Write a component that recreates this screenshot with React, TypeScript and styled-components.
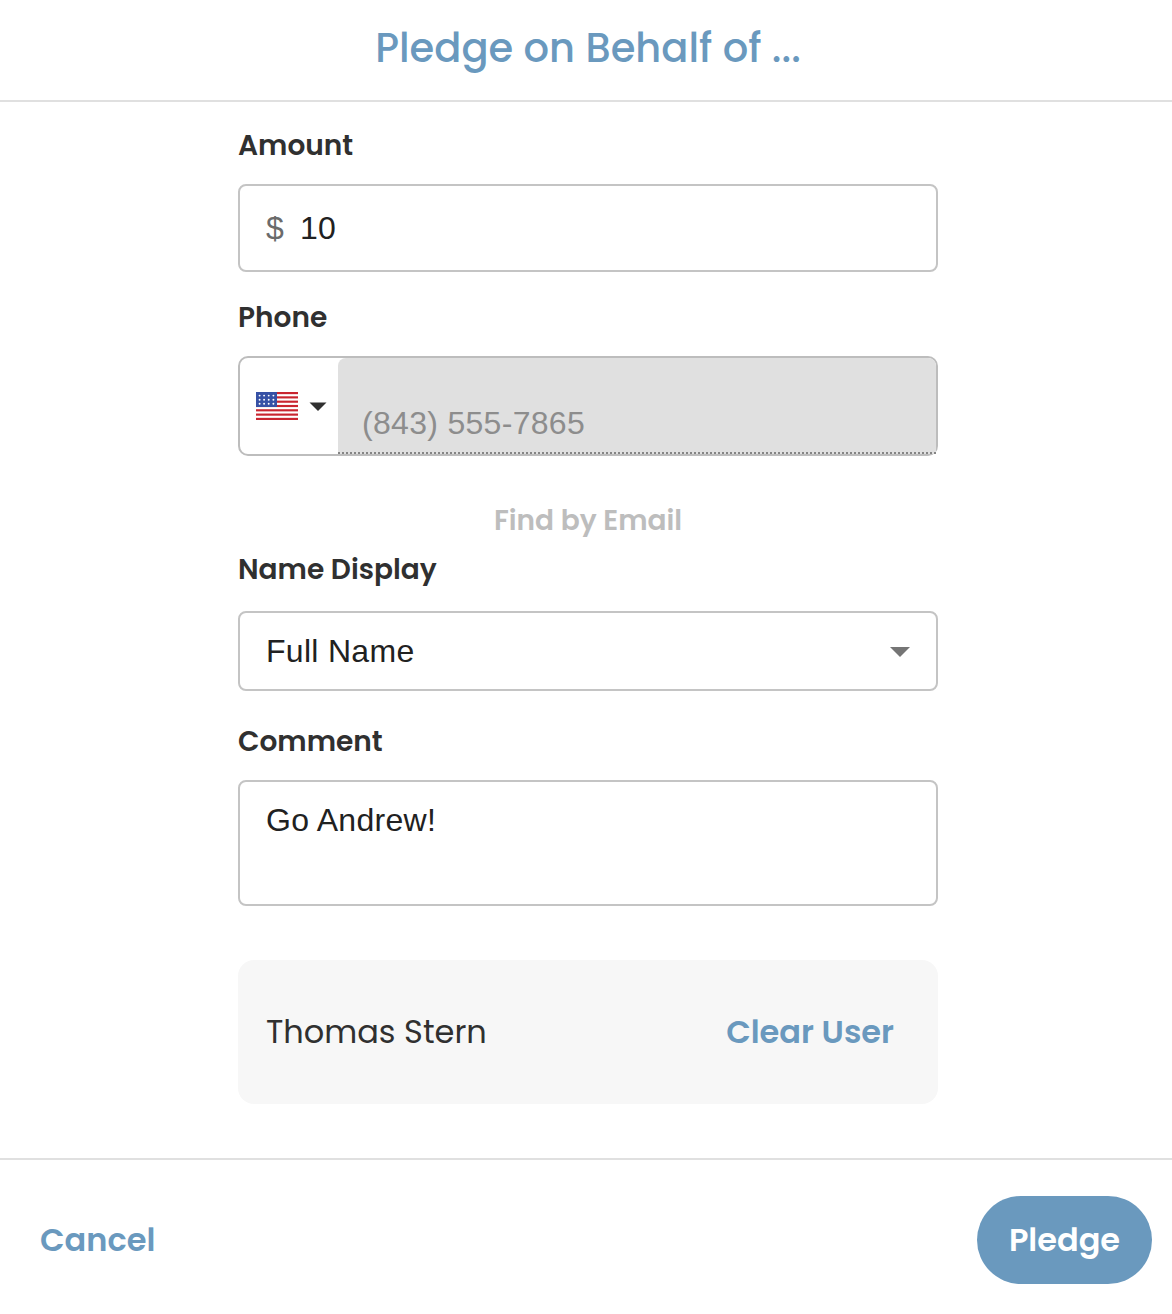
import React from "react";
import styled, { createGlobalStyle } from "styled-components";

const blue = "#6a99be";
const ink = "#303030";

const GlobalStyle = createGlobalStyle`
  *, *::before, *::after { box-sizing: border-box; }
  body {
    margin: 0;
    background: #fff;
    color: ${ink};
    font-family: Poppins, Inter, sans-serif;
  }
  button { font: inherit; border: 0; padding: 0; background: none; cursor: pointer; }
`;

const Dialog = styled.div`
  display: flex;
  flex-direction: column;
  height: 1314px;
`;

const Header = styled.header`
  display: flex;
  justify-content: center;
  height: 102px;
  padding-left: 4px;
  border-bottom: 2px solid #e0e0e0;
`;

const Title = styled.h1`
  margin: 0;
  font-size: 40px;
  font-weight: 500;
  line-height: 97px;
  white-space: nowrap;
  color: ${blue};
`;

const Form = styled.main`
  display: flex;
  flex-direction: column;
  width: 700px;
  height: 1056px;
  margin-left: 238px;
  padding-top: 23px;
`;

const Field = styled.section<{ $gap?: number; $after: number }>`
  display: flex;
  flex-direction: column;
  gap: ${(p) => p.$gap ?? 17}px;
  margin-bottom: ${(p) => p.$after}px;
`;

const Label = styled.label`
  font-size: 28px;
  font-weight: 600;
  line-height: 42px;
`;

const Control = styled.div<{ $height: number; $top?: boolean }>`
  display: flex;
  align-items: ${(p) => (p.$top ? "flex-start" : "center")};
  height: ${(p) => p.$height}px;
  padding: ${(p) => (p.$top ? "20px" : "0")} 26px 0;
  border: 2px solid #c4c4c4;
  border-radius: 8px;
  color: #212121;
  font-family: Helvetica, "Liberation Sans", Arial, sans-serif;
  font-size: 32px;
  line-height: 37px;
  letter-spacing: 0.3px;
`;

const Currency = styled.span`
  width: 34px;
  color: #6b6b6b;
`;

const SelectArrow = styled.svg`
  margin: 2px 0 0 auto;
`;

const PhoneControl = styled.div`
  display: flex;
  height: 100px;
  border: 2px solid #bdbdbd;
  border-radius: 10px;
`;

const Country = styled.button`
  && {
    display: flex;
    align-items: center;
    gap: 11px;
    width: 98px;
    padding-left: 16px;
  }
`;

const PhoneInput = styled.div`
  flex: 1;
  padding: 47px 24px 0;
  border-radius: 8px 8px 0 0;
  background:
    repeating-linear-gradient(90deg, #858585 0 2px, transparent 2px 4px) 0 94px / 100% 2px no-repeat,
    #e0e0e0;
  color: #8d8d8d;
  font-family: Helvetica, "Liberation Sans", Arial, sans-serif;
  font-size: 32px;
  line-height: 37px;
  letter-spacing: 0.3px;
`;

const FindByEmail = styled.button`
  && {
    align-self: center;
    margin-bottom: 7px;
    color: #bdbdbd;
    font-size: 28px;
    font-weight: 600;
    line-height: 42px;
  }
`;

const UserCard = styled.div`
  display: flex;
  align-items: center;
  justify-content: space-between;
  height: 144px;
  padding: 0 44px 0 28px;
  border-radius: 16px;
  background: #f7f7f7;
`;

const UserName = styled.span`
  font-size: 32px;
`;

const TextButton = styled.button`
  && {
    color: ${blue};
    font-size: 32px;
    font-weight: 600;
  }
`;

const Footer = styled.footer`
  display: flex;
  align-items: center;
  justify-content: space-between;
  height: 156px;
  padding: 6px 20px 0 40px;
  border-top: 2px solid #e0e0e0;
`;

const PledgeButton = styled(TextButton)`
  && {
    width: 175px;
    height: 88px;
    border-radius: 44px;
    background: ${blue};
    color: #fff;
  }
`;

const stripes = [0, 1, 2, 3, 4, 5, 6];
const starRows = [3.6, 7.8, 11.8];
const starCols = [3.6, 8.1, 12.7, 17.4];

const Flag = () => (
  <svg width="42" height="28" viewBox="0 0 42 28">
    <rect width="42" height="28" fill="#fff" />
    {stripes.map((i) => (
      <rect key={i} y={(i * 56) / 13} width="42" height={28 / 13} fill="#c9252f" />
    ))}
    <rect width="21" height="15" fill="#3651a5" />
    {starRows.map((y) =>
      starCols.map((x) => <circle key={`${x}-${y}`} cx={x} cy={y} r="0.95" fill="#fff" />),
    )}
  </svg>
);

export default function App() {
  return (
    <>
      <GlobalStyle />
      <Dialog>
        <Header>
          <Title>Pledge on Behalf of ...</Title>
        </Header>
        <Form>
          <Field $after={25}>
            <Label>Amount</Label>
            <Control $height={88}>
              <Currency>$</Currency>
              <span>10</span>
            </Control>
          </Field>
          <Field $after={44}>
            <Label>Phone</Label>
            <PhoneControl>
              <Country aria-label="Country">
                <Flag />
                <svg width="18" height="9" viewBox="0 0 18 9">
                  <path d="M0.5 0.5h17L9 9z" fill="#303030" />
                </svg>
              </Country>
              <PhoneInput>(843) 555-7865</PhoneInput>
            </PhoneControl>
          </Field>
          <FindByEmail>Find by Email</FindByEmail>
          <Field $gap={20} $after={30}>
            <Label>Name Display</Label>
            <Control $height={80}>
              <span>Full Name</span>
              <SelectArrow width="20" height="10" viewBox="0 0 20 10">
                <path d="M0 0h20L10 10z" fill="#757575" />
              </SelectArrow>
            </Control>
          </Field>
          <Field $after={54}>
            <Label>Comment</Label>
            <Control $height={126} $top>
              <span>Go Andrew!</span>
            </Control>
          </Field>
          <UserCard>
            <UserName>Thomas Stern</UserName>
            <TextButton>Clear User</TextButton>
          </UserCard>
        </Form>
        <Footer>
          <TextButton>Cancel</TextButton>
          <PledgeButton>Pledge</PledgeButton>
        </Footer>
      </Dialog>
    </>
  );
}
